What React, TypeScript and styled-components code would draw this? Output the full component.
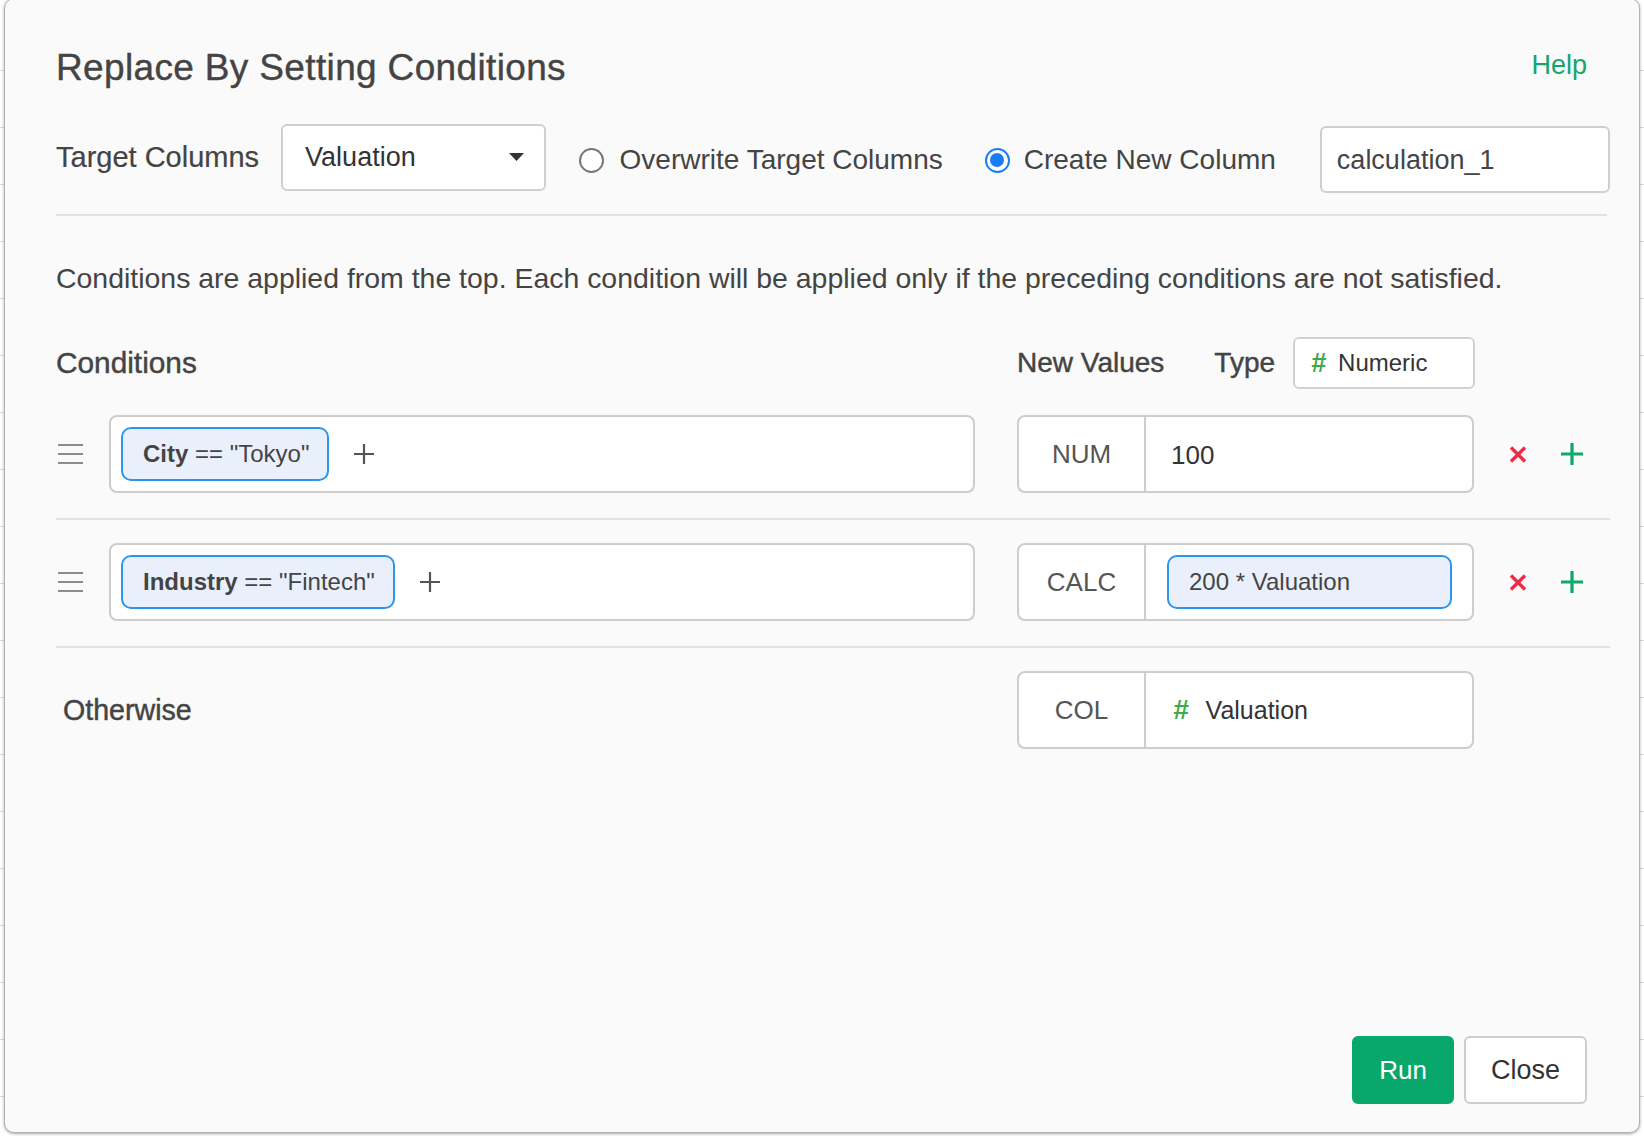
import React from "react";
import styled, { createGlobalStyle } from "styled-components";

const GlobalStyle = createGlobalStyle`
  html, body { margin: 0; padding: 0; }
  body {
    width: 1644px;
    height: 1136px;
    overflow: hidden;
    background: #fff;
    font-family: "Liberation Sans", Arial, sans-serif;
    color: #444;
  }
`;

const Page = styled.div`
  position: relative;
  width: 1644px;
  height: 1136px;
  overflow: hidden;
  background: #fff;
`;

// the data grid behind the dialog, only a few pixels of it show
const Backdrop = styled.div`
  display: flex;
  flex-direction: column;
  padding-top: 14px;
`;

const BackdropRow = styled.div`
  height: 56px;
  border-bottom: 1px solid #d9d9d9;
`;

const Modal = styled.div`
  position: absolute;
  left: 4px;
  top: -2px;
  width: 1636px;
  height: 1135px;
  box-sizing: border-box;
  background: #fafafa;
  border: 1px solid #b3b3b3;
  border-radius: 10px;
  box-shadow: 0 1px 3px rgba(0, 0, 0, 0.35);
  padding: 47px 29px 28px 51px;
  display: flex;
  flex-direction: column;
`;

const Header = styled.div`
  display: flex;
  align-items: center;
  justify-content: space-between;
  height: 44px;
  padding-right: 23px;
`;

const Title = styled.h1`
  margin: 0;
  font-size: 37px;
  letter-spacing: 0.35px;
  line-height: 44px;
  font-weight: 400;
  color: #444;
  -webkit-text-stroke: 0.4px #444;
`;

const HelpLink = styled.a`
  font-size: 27px;
  color: #14a66c;
  text-decoration: none;
  margin-top: -6px;
`;

const TargetRow = styled.div`
  display: flex;
  align-items: center;
  height: 68px;
  margin-top: 33px;
`;

const Label = styled.span<{ $medium?: boolean; $size?: number }>`
  font-size: ${(p) => p.$size ?? 28}px;
  color: #444;
  white-space: nowrap;
  -webkit-text-stroke: ${(p) => (p.$medium ? "0.45px #444" : "0.2px #444")};
`;

const Select = styled.div`
  margin-left: 22px;
  width: 266px;
  height: 67px;
  box-sizing: border-box;
  border: 2px solid #cfcfcf;
  border-radius: 6px;
  background: #fff;
  display: flex;
  align-items: center;
  justify-content: space-between;
  padding: 0 20px 0 22px;
  font-size: 27px;
  color: #333;
`;

const RadioOption = styled.label<{ $gap: number; $offset: number }>`
  display: flex;
  align-items: center;
  gap: ${(p) => p.$gap}px;
  margin-left: ${(p) => p.$offset}px;
  margin-top: 6px;
  font-size: 28px;
  color: #444;
  white-space: nowrap;
`;

const RadioDot = styled.span<{ $checked?: boolean }>`
  width: 25px;
  height: 25px;
  box-sizing: border-box;
  border-radius: 50%;
  border: 2px solid ${(p) => (p.$checked ? "#1a7cf5" : "#777")};
  background: #fff;
  display: flex;
  align-items: center;
  justify-content: center;
  &::after {
    content: "";
    display: ${(p) => (p.$checked ? "block" : "none")};
    width: 14px;
    height: 14px;
    border-radius: 50%;
    background: #1a7cf5;
  }
`;

const TextInput = styled.div`
  margin-left: 44px;
  margin-top: 4px;
  width: 292px;
  height: 67px;
  box-sizing: border-box;
  border: 2px solid #cfcfcf;
  border-radius: 6px;
  background: #fff;
  display: flex;
  align-items: center;
  padding: 3px 0 0 15px;
  font-size: 27px;
  color: #444;
`;

const Divider = styled.div`
  margin-top: 23px;
  width: 1551px;
  height: 2px;
  background: #e2e2e2;
`;

const Description = styled.p`
  margin: 45px 0 0;
  font-size: 28.45px;
  line-height: 34px;
  color: #444;
  white-space: nowrap;
`;

const CondHeader = styled.div`
  display: flex;
  align-items: center;
  height: 52px;
  margin-top: 42px;
  margin-bottom: 3px;
`;

const HeaderCell = styled.div<{ $width?: number; $offset?: number }>`
  width: ${(p) => (p.$width ? `${p.$width}px` : "auto")};
  margin-left: ${(p) => p.$offset ?? 0}px;
`;

const TypeBox = styled.div`
  margin-left: 18px;
  width: 182px;
  height: 52px;
  box-sizing: border-box;
  border: 2px solid #d2d2d2;
  border-radius: 6px;
  background: #fff;
  display: flex;
  align-items: center;
  gap: 12px;
  padding-left: 16px;
  font-size: 24px;
  color: #333;
`;

const Hash = styled.span<{ $size: number }>`
  font-size: ${(p) => p.$size}px;
  font-weight: 700;
  color: #3dab4b;
  font-style: italic;
`;

const Row = styled.div<{ $last?: boolean }>`
  display: flex;
  align-items: center;
  padding: 23px 0 ${(p) => (p.$last ? 0 : 25)}px;
  border-bottom: ${(p) => (p.$last ? "none" : "2px solid #e3e3e3")};
`;

const Handle = styled.div`
  width: 25px;
  margin: 0 26px 0 2px;
  display: flex;
`;

const CondBox = styled.div`
  width: 866px;
  height: 78px;
  box-sizing: border-box;
  border: 2px solid #cdcdcd;
  border-radius: 8px;
  background: #fff;
  display: flex;
  align-items: center;
  padding-left: 10px;
`;

const Chip = styled.div<{ $grow?: boolean }>`
  height: 54px;
  box-sizing: border-box;
  border: 2px solid #2a96f0;
  border-radius: 10px;
  background: #eaf0fb;
  display: flex;
  align-items: center;
  padding: 0 18px 0 20px;
  font-size: 24px;
  color: #444;
  white-space: pre;
  flex: ${(p) => (p.$grow ? 1 : "none")};
  b {
    font-weight: 700;
    color: #444;
  }
`;

const AddCondition = styled.span`
  margin-left: 25px;
  display: flex;
`;

const OtherwiseLabel = styled.div`
  width: 954px;
  margin-left: 7px;
`;

const ValueBox = styled.div<{ $offset?: number }>`
  margin-left: ${(p) => p.$offset ?? 42}px;
  width: 457px;
  height: 78px;
  box-sizing: border-box;
  border: 2px solid #cdcdcd;
  border-radius: 8px;
  background: #fff;
  display: flex;
  overflow: hidden;
`;

const KindCell = styled.div`
  width: 125px;
  border-right: 2px solid #cdcdcd;
  display: flex;
  align-items: center;
  justify-content: center;
  font-size: 26px;
  color: #555;
`;

const ValueCell = styled.div<{ $pad: string; $gap?: number }>`
  flex: 1;
  display: flex;
  align-items: center;
  gap: ${(p) => p.$gap ?? 0}px;
  padding: ${(p) => p.$pad};
  font-size: 26px;
  color: #333;
`;

const Actions = styled.div`
  margin-left: 35px;
  display: flex;
  align-items: center;
  gap: 34px;
`;

const IconButton = styled.span`
  display: flex;
  cursor: pointer;
`;

const Footer = styled.div`
  margin-top: auto;
  display: flex;
  justify-content: flex-end;
  gap: 10px;
  padding-right: 23px;
`;

const Button = styled.button<{ $primary?: boolean; $width: number }>`
  width: ${(p) => p.$width}px;
  height: 68px;
  box-sizing: border-box;
  border-radius: 6px;
  border: 2px solid ${(p) => (p.$primary ? "#08a86c" : "#cdcdcd")};
  background: ${(p) => (p.$primary ? "#08a86c" : "#fff")};
  color: ${(p) => (p.$primary ? "#fff" : "#333")};
  font-family: "Liberation Sans", Arial, sans-serif;
  font-size: ${(p) => (p.$primary ? 26 : 27)}px;
  padding: 0;
  cursor: pointer;
`;

const Caret = () => (
  <svg width="15" height="8" viewBox="0 0 15 8">
    <polygon points="0,0 15,0 7.5,8" fill="#333" />
  </svg>
);

const DragIcon = () => (
  <svg width="25" height="20" viewBox="0 0 25 20">
    <path d="M0 1h25M0 10h25M0 19h25" stroke="#8c8c8c" strokeWidth="2" />
  </svg>
);

const PlusIcon = ({ color, size, stroke }: { color: string; size: number; stroke: number }) => (
  <svg width={size} height={size} viewBox={`0 0 ${size} ${size}`}>
    <path
      d={`M${size / 2} 0v${size}M0 ${size / 2}h${size}`}
      stroke={color}
      strokeWidth={stroke}
    />
  </svg>
);

const CrossIcon = () => (
  <svg width="18" height="17" viewBox="0 0 18 17">
    <path d="M2 1.5l14 14M16 1.5l-14 14" stroke="#ee2a45" strokeWidth="3.4" />
  </svg>
);

type Cond = { field: string; value: string; kind: string; result: string; calc?: boolean };

const conditions: Cond[] = [
  { field: "City", value: '"Tokyo"', kind: "NUM", result: "100" },
  { field: "Industry", value: '"Fintech"', kind: "CALC", result: "200 * Valuation", calc: true },
];

export default function App() {
  return (
    <Page>
      <GlobalStyle />
      <Backdrop>
        {Array.from({ length: 20 }).map((_, i) => (
          <BackdropRow key={i} />
        ))}
      </Backdrop>

      <Modal>
        <Header>
          <Title>Replace By Setting Conditions</Title>
          <HelpLink href="#">Help</HelpLink>
        </Header>

        <TargetRow>
          <Label $size={29}>Target Columns</Label>
          <Select>
            Valuation
            <Caret />
          </Select>
          <RadioOption $gap={16} $offset={33}>
            <RadioDot />
            Overwrite Target Columns
          </RadioOption>
          <RadioOption $gap={14} $offset={42}>
            <RadioDot $checked />
            Create New Column
          </RadioOption>
          <TextInput>calculation_1</TextInput>
        </TargetRow>

        <Divider />

        <Description>
          Conditions are applied from the top. Each condition will be applied only if the
          preceding conditions are not satisfied.
        </Description>

        <CondHeader>
          <HeaderCell $width={961}>
            <Label $medium $size={29.8}>
              Conditions
            </Label>
          </HeaderCell>
          <HeaderCell>
            <Label $medium>New Values</Label>
          </HeaderCell>
          <HeaderCell $offset={50}>
            <Label $medium>Type</Label>
          </HeaderCell>
          <TypeBox>
            <Hash $size={27}>#</Hash>
            Numeric
          </TypeBox>
        </CondHeader>

        {conditions.map((c) => (
          <Row key={c.field}>
            <Handle>
              <DragIcon />
            </Handle>
            <CondBox>
              <Chip>
                <b>{c.field}</b>
                {" == "}
                {c.value}
              </Chip>
              <AddCondition>
                <PlusIcon color="#555" size={20} stroke={2.2} />
              </AddCondition>
            </CondBox>
            <ValueBox>
              <KindCell>{c.kind}</KindCell>
              {c.calc ? (
                <ValueCell $pad="0 20px 0 21px">
                  <Chip $grow>
                    <span style={{ fontSize: 24 }}>{c.result}</span>
                  </Chip>
                </ValueCell>
              ) : (
                <ValueCell $pad="2px 0 0 25px">{c.result}</ValueCell>
              )}
            </ValueBox>
            <Actions>
              <IconButton>
                <CrossIcon />
              </IconButton>
              <IconButton>
                <PlusIcon color="#0aa86b" size={22} stroke={3.2} />
              </IconButton>
            </Actions>
          </Row>
        ))}

        <Row $last>
          <OtherwiseLabel>
            <Label $medium $size={28.6}>
              Otherwise
            </Label>
          </OtherwiseLabel>
          <ValueBox $offset={0}>
            <KindCell>COL</KindCell>
            <ValueCell $pad="0 0 0 27px" $gap={17}>
              <Hash $size={28}>#</Hash>
              <span style={{ fontSize: 25 }}>Valuation</span>
            </ValueCell>
          </ValueBox>
        </Row>

        <Footer>
          <Button $primary $width={102}>
            Run
          </Button>
          <Button $width={123}>Close</Button>
        </Footer>
      </Modal>
    </Page>
  );
}
